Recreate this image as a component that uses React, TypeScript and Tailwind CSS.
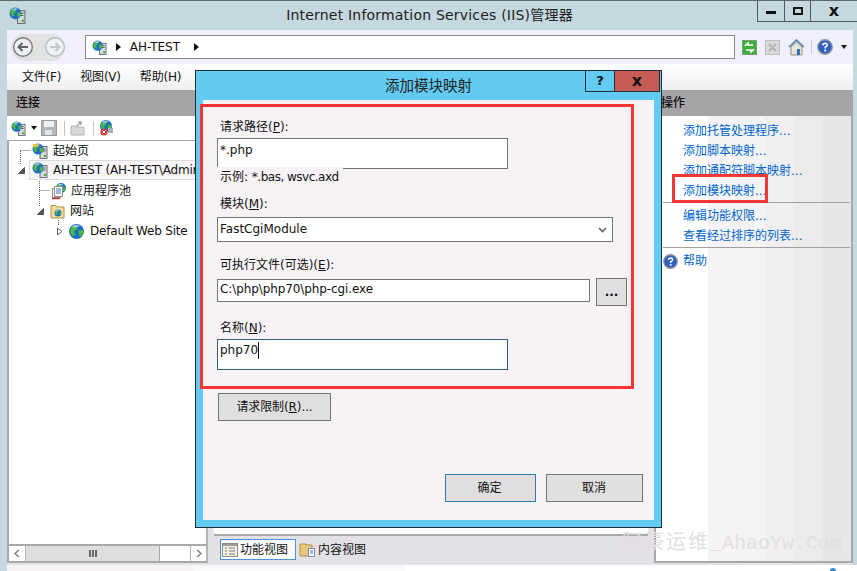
import React from "react";

const FONT = { fontFamily: '"DejaVu Sans","Noto Sans CJK SC",sans-serif' };

function GlobeBall({ x = 0, y = 0, r = 6 }: { x?: number; y?: number; r?: number }) {
  return (
    <g transform={`translate(${x} ${y}) scale(${r / 6})`}>
      <circle cx="6" cy="6" r="6" fill="#1f6fc4" />
      <path d="M2 2.5 Q5 0.5 7 1.5 L6.5 4 L4 6 L5 8.5 L3 9.5 Q0.5 7 1 4.5Z" fill="#4fb83f" />
      <path d="M8 5 L11.5 5 Q12 8 10 10 L8 9Z" fill="#4fb83f" />
      <path d="M3 1.5 Q6 0 9 1.5 Q6 2.5 3 3Z" fill="#b9e3fa" opacity=".8" />
    </g>
  );
}

function ServerGlobe({ size = 16 }: { size?: number }) {
  return (
    <svg width={size} height={size} viewBox="0 0 16 16" className="shrink-0">
      <rect x="8" y="3.5" width="7" height="12" fill="#d5d8dc" stroke="#6b7078" strokeWidth="1" />
      <path d="M9.5 6h4M9.5 8h4" stroke="#555b63" />
      <rect x="12" y="12" width="2" height="2" fill="#40b030" />
      <GlobeBall x={0.5} y={0.5} r={5.5} />
    </svg>
  );
}

function StartIcon() {
  return (
    <svg width="16" height="16" viewBox="0 0 16 16" className="shrink-0">
      <rect x="8" y="3.5" width="7" height="12" fill="#d5d8dc" stroke="#6b7078" />
      <path d="M9.5 6h4M9.5 8h4" stroke="#555b63" />
      <rect x="12" y="12" width="2" height="2" fill="#40b030" />
      <GlobeBall x={0.5} y={0.5} r={5.5} />
      <path d="M1 1h5v3H1z" fill="#f0b93a" />
    </svg>
  );
}

function PoolIcon() {
  return (
    <svg width="17" height="17" viewBox="0 0 17 17" className="shrink-0">
      <GlobeBall x={6} y={0} r={5} />
      <rect x="2.5" y="5.5" width="8" height="9" fill="#fff" stroke="#a58f72" />
      <rect x="4.5" y="3.5" width="8" height="10" fill="#fff" stroke="#8d8d8d" />
      <path d="M6 6h5M6 8h5M6 10h5" stroke="#3a78c8" />
      <path d="M2 15.5h8" stroke="#c03a2a" strokeWidth="1.4" />
    </svg>
  );
}

function FolderIcon() {
  return (
    <svg width="15" height="15" viewBox="0 0 15 15" className="shrink-0">
      <path d="M1 3V1.5h5L7 3h7v11H1Z" fill="#f6dd9b" stroke="#b08f47" />
      <GlobeBall x={4.5} y={5.5} r={3.5} />
    </svg>
  );
}

function Expander({ open }: { open?: boolean }) {
  return (
    <svg width="9" height="9" viewBox="0 0 9 9" className="shrink-0">
      {open ? <path d="M7.5 1.5V7.5H1.5Z" fill="#555" stroke="#555" /> : <path d="M2.5 1L7 4.5L2.5 8Z" fill="#fff" stroke="#666" />}
    </svg>
  );
}

function ArrowBtn({ dir }: { dir: "l" | "r" }) {
  return (
    <svg width="20" height="20" viewBox="0 0 20 20">
      <circle cx="10" cy="10" r="9.3" fill="#eef0f2" stroke={dir === "l" ? "#77797b" : "#b8bcbf"} strokeWidth="1.4" />
      <path
        d={dir === "l" ? "M15 10H6M9.5 6L5.5 10L9.5 14" : "M5 10H14M10.5 6L14.5 10L10.5 14"}
        fill="none"
        stroke={dir === "l" ? "#606264" : "#c2c6c9"}
        strokeWidth="2"
      />
    </svg>
  );
}

function Tri({ className = "" }: { className?: string }) {
  return (
    <svg width="5" height="8" viewBox="0 0 5 8" className={className}>
      <path d="M0 0L5 4L0 8Z" fill="#111" />
    </svg>
  );
}

function HelpBall({ size = 16 }: { size?: number }) {
  return (
    <svg width={size} height={size} viewBox="0 0 16 16" className="shrink-0">
      <circle cx="8" cy="8" r="7.2" fill="#2f5fc0" stroke="#8b9299" strokeWidth="1.4" />
      <path d="M5.8 6.3Q6 4.2 8.2 4.2Q10.4 4.4 10.2 6.2Q10 7.4 8.2 8.2V9.5" fill="none" stroke="#fff" strokeWidth="1.6" />
      <rect x="7.3" y="10.6" width="1.8" height="1.8" fill="#fff" />
    </svg>
  );
}

function Link({ children }: { children: React.ReactNode }) {
  return <div className="h-5 leading-5 text-[#0066cc] whitespace-nowrap">{children}</div>;
}

function Label({ children, className = "" }: { children: React.ReactNode; className?: string }) {
  return <div className={`h-4 leading-4 text-[12px] text-[#111] whitespace-nowrap ${className}`}>{children}</div>;
}

export default function App() {
  return (
    <div className="relative w-[857px] h-[571px] overflow-hidden bg-white flex flex-col text-[12px] text-[#111]" style={FONT}>
      {/* title bar */}
      <div className="h-[30px] shrink-0 bg-[#c5d7df] border-t border-[#5d6a70] flex items-start relative">
        <div className="ml-[9px] mt-[6px]"><ServerGlobe size={17} /></div>
        <div className="flex-1 text-center text-[14px] leading-[28px] text-[#222] pl-[76px] tracking-[0.2px]">Internet Information Services (IIS)管理器</div>
        <div className="flex h-[21px] border-b border-l border-[#4d5a60]">
          <div className="w-[27px] border-r border-[#4d5a60] flex items-center justify-center"><div className="w-[10px] h-[3px] mt-[3px] bg-[#111]" /></div>
          <div className="w-[26px] border-r border-[#4d5a60] flex items-center justify-center"><div className="w-[10px] h-[8px] border-2 border-[#111]" /></div>
          <div className="w-[46px] flex items-center justify-center text-[16px] font-bold leading-none text-[#111]">x</div>
        </div>
      </div>

      <div className="flex-1 min-h-0 bg-[#c5d7df] pl-[7px] pr-[4px] flex flex-col">
        {/* nav bar */}
        <div className="h-[34px] shrink-0 bg-[#f0f0fd] flex items-center pl-[4px] pr-[6px]">
          <div className="w-[54px] h-[27px] rounded-[14px] bg-[#dfe1e3] flex items-center justify-between pl-[2px] pr-0">
            <ArrowBtn dir="l" />
            <ArrowBtn dir="r" />
          </div>
          <div className="ml-[20px] w-[654px] h-[24px] bg-white border border-[#8c8c8c] flex items-center pl-[6px]">
            <ServerGlobe size={15} />
            <Tri className="ml-[9px]" />
            <span className="ml-[9px] text-[12px]">AH-TEST</span>
            <Tri className="ml-[14px]" />
          </div>
          <div className="ml-[7px] w-[15px] h-[15px] bg-[#3cae3c] border border-[#7c9c7c] flex items-center justify-center">
            <svg width="11" height="11" viewBox="0 0 11 11"><path d="M1 4L4 1V3H9M10 7L7 10V8H2" fill="none" stroke="#fff" strokeWidth="1.6" /></svg>
          </div>
          <div className="ml-[8px] w-[15px] h-[15px] bg-[#d8d8d8] border border-[#bdbdbd] flex items-center justify-center">
            <svg width="9" height="9" viewBox="0 0 9 9"><path d="M1 1L8 8M8 1L1 8" stroke="#b4b4b4" strokeWidth="2" /></svg>
          </div>
          <svg width="17" height="17" viewBox="0 0 17 17" className="ml-[8px]">
            <path d="M1 8L8.5 1L16 8" fill="none" stroke="#4a7fb5" strokeWidth="1.6" />
            <path d="M3 8L8.5 3L14 8V16H3Z" fill="#e8e4da" stroke="#8d8d85" />
            <rect x="9" y="10" width="3" height="6" fill="#2f6fb5" />
          </svg>
          <div className="ml-[6px] w-px h-[14px] bg-[#c9c9d0]" />
          <div className="ml-[5px]"><HelpBall /></div>
          <svg width="6" height="4" viewBox="0 0 6 4" className="ml-[8px]"><path d="M0 0H6L3 4Z" fill="#111" /></svg>
        </div>

        {/* menu */}
        <div className="h-[26px] shrink-0 bg-gradient-to-b from-white to-[#eeeeee] flex items-center pl-[15px] gap-[19px] text-[12px] tracking-[-0.2px]">
          <span>文件(F)</span>
          <span>视图(V)</span>
          <span>帮助(H)</span>
        </div>

        {/* panes */}
        <div className="flex-1 min-h-0 flex bg-[#e4e1e6]">
          {/* left */}
          <div className="w-[201px] shrink-0 flex flex-col">
            <div className="h-[26px] shrink-0 bg-[#a5a3a5] pl-[9px] leading-[27px] font-medium">连接</div>
            <div className="h-[24px] shrink-0 bg-white flex items-center pl-[4px]">
              <ServerGlobe size={15} />
              <svg width="6" height="4" viewBox="0 0 6 4" className="ml-[5px]"><path d="M0 0H6L3 4Z" fill="#111" /></svg>
              <svg width="16" height="16" viewBox="0 0 16 16" className="ml-[4px]"><rect x="0.5" y="0.5" width="15" height="15" fill="#b3b6b9" stroke="#999" /><rect x="3" y="1" width="10" height="6" fill="#eef0f2" /><rect x="4" y="10" width="7" height="5" fill="#e2e3e4" /></svg>
              <div className="ml-[7px] w-px h-[15px] bg-[#c4c4c4]" />
              <svg width="15" height="15" viewBox="0 0 15 15" className="ml-[5px]"><path d="M1 5h5l1 1h7v8H1Z" fill="#d9d9d9" stroke="#b5b5b5" /><path d="M6 6L11 1M8 1h3v3" fill="none" stroke="#a8a8a8" strokeWidth="1.5" /></svg>
              <div className="ml-[8px] w-px h-[15px] bg-[#c4c4c4]" />
              <svg width="16" height="16" viewBox="0 0 16 16" className="ml-[5px]"><GlobeBall x={1} y={0} r={6} /><path d="M9 8h5v5H9z" fill="#aab0b5" /><circle cx="5" cy="12" r="3.6" fill="#d23a3a" /><path d="M3.5 10.5l3 3M6.5 10.5l-3 3" stroke="#fff" /></svg>
            </div>
            <div className="relative flex-1 min-h-0 bg-white border-l-2 border-t border-r-2 border-[#a8a8a8] border-r-[#b4b4b4]">
              <svg className="absolute left-0 top-0" width="80" height="100">
                <path d="M11.5 10V24M11.5 9.5H22M30.5 40V65M30.5 49.5H41M49.5 79V85" stroke="#666" strokeDasharray="1 1" fill="none" />
              </svg>
              <div className="h-[19px] flex items-center pl-[23px] gap-[5px]"><StartIcon /><span>起始页</span></div>
              <div className="h-[21px] relative flex items-center pl-[23px] gap-[5px] overflow-hidden">
                <div className="absolute left-[20px] right-[10px] top-0 bottom-px border border-[#dcdcdc] bg-[#f8f5f8]" />
                <div className="absolute left-[8px] top-[6px]"><Expander open /></div>
                <div className="relative flex items-center gap-[5px] whitespace-nowrap tracking-[-0.2px] -mt-px"><ServerGlobe /><span>AH-TEST (AH-TEST\Administrator)</span></div>
              </div>
              <div className="h-5 flex items-center pl-[41px] gap-[4px]"><PoolIcon /><span>应用程序池</span></div>
              <div className="h-5 flex items-center pl-[27px]"><Expander open /><span className="ml-[5px]"><FolderIcon /></span><span className="ml-[5px]">网站</span></div>
              <div className="h-5 flex items-center pl-[46px]"><Expander /><span className="ml-[5px]"><svg width="15" height="15" viewBox="0 0 12 12"><GlobeBall /></svg></span><span className="ml-[6px] tracking-[-0.2px]">Default Web Site</span></div>
            </div>
            <div className="h-[19px] shrink-0 bg-white border-2 border-t-2 border-[#a8a8a8] border-r-[#b4b4b4] flex">
              <div className="w-[17px] border-r border-[#b4b4b4] flex items-center justify-center">
                <svg width="6" height="9" viewBox="0 0 6 9"><path d="M5 1L1 4.5L5 8" fill="none" stroke="#777" strokeWidth="1.3" /></svg>
              </div>
              <div className="w-[134px] bg-[#dedede] border-r border-[#a8a8a8] flex items-center justify-center gap-[1px]">
                <div className="w-[2px] h-[7px] bg-[#666]" /><div className="w-[2px] h-[7px] bg-[#666]" /><div className="w-[2px] h-[7px] bg-[#666]" />
              </div>
              <div className="flex-1 border-r border-[#b4b4b4]" />
              <div className="w-[15px] flex items-center justify-center">
                <svg width="6" height="9" viewBox="0 0 6 9"><path d="M1 1L5 4.5L1 8" fill="none" stroke="#777" strokeWidth="1.3" /></svg>
              </div>
            </div>
            <div className="h-[2px] shrink-0 bg-[#e4e1e6]" />
          </div>

          {/* centre */}
          <div className="flex-1 min-w-0 flex flex-col">
            <div className="h-[26px] shrink-0 bg-[#a5a3a5]" />
            <div className="flex-1 min-h-0 mx-[6px] bg-white border-b-2 border-[#a8a8a8]" />
            <div className="h-[29px] shrink-0 flex items-start pl-[12px] pt-[3px]">
              <div className="w-[76px] h-[21px] border border-[#4a90e0] bg-white flex items-center pl-[1px] gap-[2px]">
                <svg width="16" height="16" viewBox="0 0 16 16" className="shrink-0"><rect x="0.5" y="1.5" width="15" height="13" fill="#f3efe2" stroke="#8b8b8b" /><rect x="1" y="2" width="14" height="2" fill="#9a9a9a" /><path d="M3 6h2M3 9h2M3 12h2M7 6h6M7 9h6M7 12h6" stroke="#7b7b7b" /></svg>
                <span>功能视图</span>
              </div>
              <div className="ml-[3px] h-[21px] flex items-center gap-[2px]">
                <svg width="17" height="17" viewBox="0 0 17 17" className="shrink-0"><path d="M1 3h6l1 1h5v11H1Z" fill="#e8c77a" stroke="#a98f55" /><rect x="9.5" y="7.5" width="6" height="8" fill="#fff" stroke="#7b8fa8" /><path d="M11 10h3M11 12h3" stroke="#3a78c8" /></svg>
                <span>内容视图</span>
              </div>
            </div>
          </div>

          {/* right */}
          <div className="w-[199px] shrink-0 flex flex-col pb-[2px]">
            <div className="h-[26px] shrink-0 bg-[#a5a3a5] pl-[7px] leading-[27px] font-medium">操作</div>
            <div className="flex-1 min-h-0 border-r-2 border-b-2 border-l-2 border-[#a8a8a8] border-t-0 pl-[27px] pr-[1px] pt-[5px] bg-[linear-gradient(to_right,#ffffff_0,#ffffff_52px,#f6f3f6_52px,#f6f3f6_82px,#f3f3f3_82px,#f3f3f3_109px,#f0eef0_109px,#f0eef0_139px,#ebebeb_139px,#ebebeb_167px,#e6e6e6_167px)]">
              <Link>添加托管处理程序...</Link>
              <Link>添加脚本映射...</Link>
              <Link>添加通配符脚本映射...</Link>
              <Link>添加模块映射...</Link>
              <div className="h-px bg-[#a0a0a0] -ml-[20px] mt-px mb-[3px]" />
              <Link>编辑功能权限...</Link>
              <Link>查看经过排序的列表...</Link>
              <div className="h-px bg-[#a0a0a0] -ml-[20px] mt-px mb-[3px]" />
              <div className="flex items-center h-5 -ml-[20px]">
                <HelpBall size={15} />
                <span className="ml-[5px] text-[#0066cc]">帮助</span>
              </div>
            </div>
          </div>
        </div>
      </div>

      {/* bottom strip */}
      <div className="h-[6px] shrink-0 flex">
        <div className="w-[7px] bg-[#c5d7df]" />
        <div className="w-[186px] bg-[#f6f2f6]" />
        <div className="w-[212px] bg-[#f9f9f9]" />
        <div className="flex-1 bg-white" />
      </div>

      {/* dialog */}
      <div className="absolute left-[195px] top-[70px] w-[467px] h-[458px] bg-[#63caf2] border border-[#222d33] flex flex-col">
        <div className="h-[29px] shrink-0 relative flex justify-center">
          <span className="text-[14.5px] leading-[30px] text-[#222]">添加模块映射</span>
          <div className="absolute right-[1px] top-0 flex h-[21px]">
            <div className="w-[29px] border-l border-b border-[#222d33] flex items-center justify-center text-[13px] font-bold">?</div>
            <div className="w-[46px] border-l border-r border-b border-[#222d33] bg-[#c75b53] flex items-center justify-center text-[16px] font-bold leading-none">x</div>
          </div>
        </div>
        <div className="mx-[7px] mb-[7px] flex-1 min-h-0 bg-[#f6f2f6] flex flex-col pl-[14px] text-[12px]">
          <Label className="mt-[19px] ml-[3px]">请求路径(<u>P</u>):</Label>
          <div className="mt-[3px] w-[291px] h-[31px] bg-white border border-[#767676] pl-[2px] leading-[22px] text-[#111]">*.php</div>
          <div className="-mt-[2px] w-[126px] h-[19px] bg-[#f6f2f6] relative pl-[3px] leading-[20px] whitespace-nowrap">示例: <span className="tracking-[-0.5px]">*.bas, wsvc.axd</span></div>
          <Label className="mt-[10px] ml-[3px]">模块(<u>M</u>):</Label>
          <div className="mt-[5px] w-[396px] h-[25px] bg-white border border-[#767676] pl-[2px] flex items-center justify-between pr-[5px]">
            <span className="-mt-[2px]">FastCgiModule</span>
            <svg width="9" height="6" viewBox="0 0 9 6"><path d="M1 1L4.5 4.5L8 1" fill="none" stroke="#666" strokeWidth="1.6" /></svg>
          </div>
          <Label className="mt-[15px] ml-[3px]">可执行文件(可选)(<u>E</u>):</Label>
          <div className="mt-[5px] flex items-start">
            <div className="mt-[1px] w-[373px] h-[23px] bg-white border border-[#767676] pl-[2px] leading-[19px] tracking-[-0.1px]">C:\php\php70\php-cgi.exe</div>
            <div className="ml-[6px] w-[31px] h-[28px] bg-[#dfdfdf] border border-[#767676] flex items-center justify-center font-bold">...</div>
          </div>
          <Label className="mt-[14px] ml-[3px]">名称(<u>N</u>):</Label>
          <div className="mt-[3px] w-[291px] h-[31px] bg-white border border-[#2e5f8a] pl-[2px] flex items-start"><span className="leading-[20px]">php70</span><span className="w-px h-[17px] mt-[2px] bg-[#111]" /></div>
          <div className="mt-[23px] ml-px w-[113px] h-[28px] bg-[#dfdfdf] border border-[#767676] flex items-center justify-center tracking-[-0.1px]">请求限制(<u>R</u>)...</div>
          <div className="mt-[53px] ml-[228px] flex gap-[10px]">
            <div className="w-[91px] h-[28px] bg-[#dfdfdf] border border-[#2f7ab0] flex items-center justify-center pr-[2px]">确定</div>
            <div className="w-[97px] h-[28px] bg-[#dfdfdf] border border-[#767676] flex items-center justify-center pr-[1px]">取消</div>
          </div>
        </div>
      </div>

      {/* annotations */}
      <div className="absolute left-[200px] top-[104px] w-[434px] h-[285px] border-[3px] border-[#f83535]" />
      <div className="absolute left-[672px] top-[174px] w-[96px] h-[29px] border-[3px] border-[#f83535]" />

      {/* watermark */}
      <div className="absolute left-[622px] top-[531px] h-[26px] leading-[26px] text-[#e2dee2] whitespace-nowrap flex" style={{ fontFamily: '"Liberation Mono","Noto Sans CJK SC",monospace' }}>
        <span className="text-[20px] tracking-[2px]">阿豪运维</span>
        <span className="text-[20px]">_AhaoYw.Com</span>
      </div>

      {/* small tray mark at the bottom edge */}
      <svg className="absolute left-[829px] top-[567px]" width="8" height="4" viewBox="0 0 8 4"><path d="M1 4Q1 1 4 1Q7 1 7 4Z" fill="#3a8ac8" /></svg>
    </div>
  );
}
